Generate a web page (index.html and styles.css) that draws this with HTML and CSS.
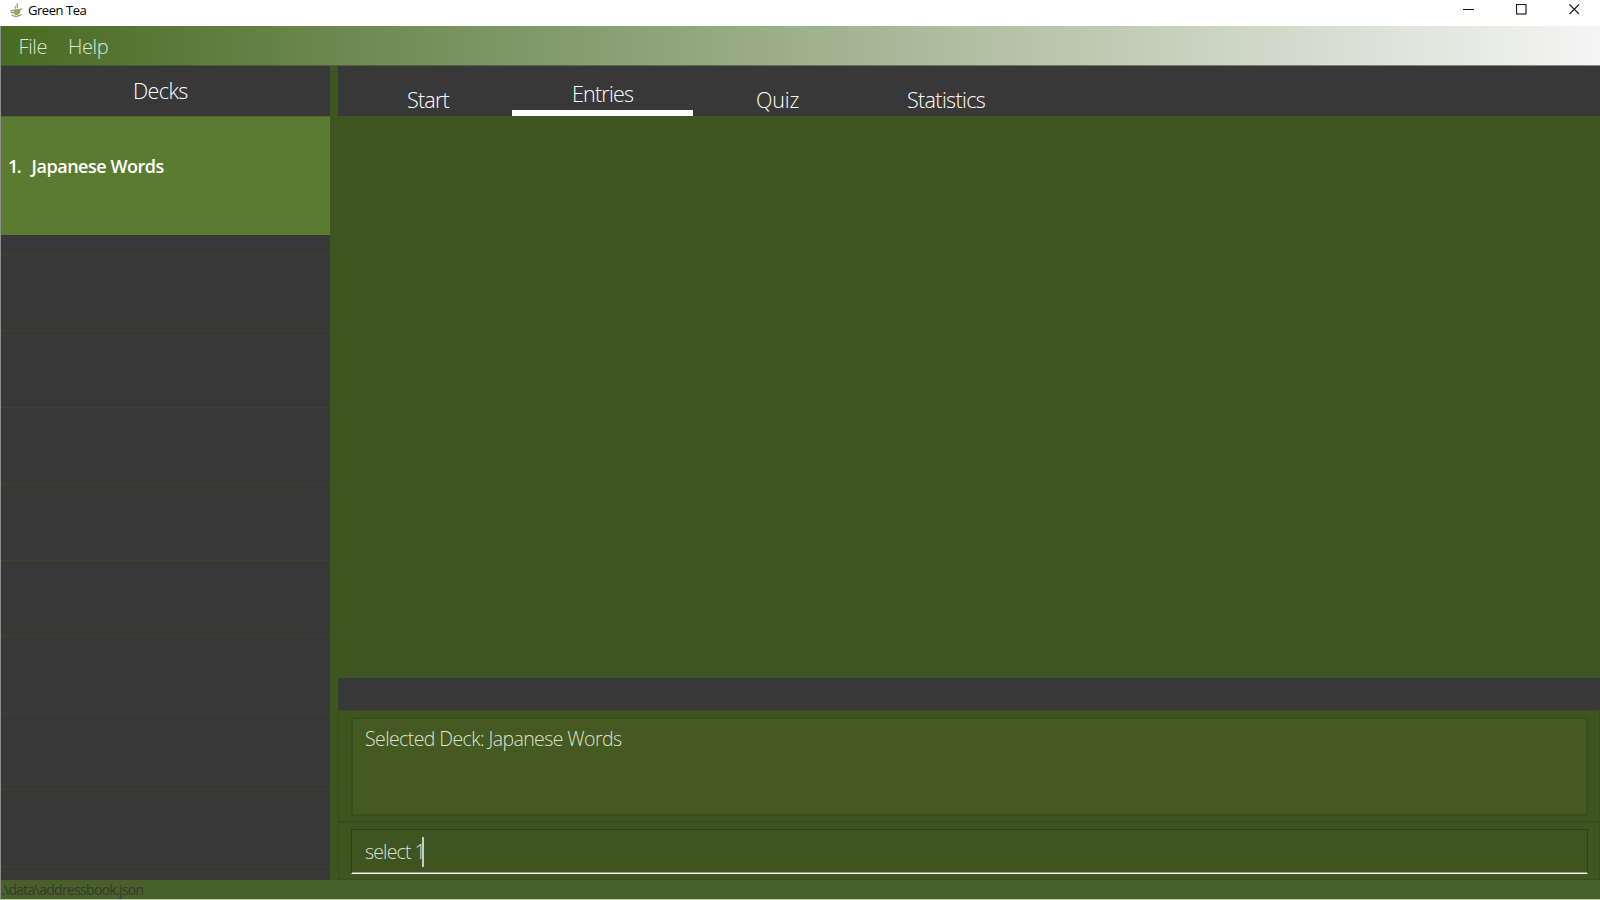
FILE: index.html
```html
<!DOCTYPE html>
<html lang="en">
<head>
<meta charset="utf-8">
<title>Green Tea</title>
<link rel="stylesheet" href="styles.css">
</head>
<body>
<div class="window">
  <header class="titlebar">
    <svg class="logo" width="13" height="15" viewBox="0 0 13 15">
      <path d="M7.600.4C6 2 8.600 2.600 7 4.800M5.600 3.200q-.8 1 .2 2.200" fill="none" stroke="#a3ad70" stroke-width="1.500"/>
      <path d="M3.400 6.400l7-.6c.4 2.800-.5 5.200-2.400 6.300H5.300C3.900 10.900 3.300 8.800 3.400 6.400z" fill="#94a954"/>
      <path d="M3.500 7.400C.2 6.600.2 9.800 4.200 10M10.400 6.400l2-.6" fill="none" stroke="#8a9b7c" stroke-width="1.200"/>
      <path d="M1.500 12q5 2.800 10-.4" fill="none" stroke="#7d9087" stroke-width="1.200"/>
    </svg>
    <span class="app-name">Green Tea</span>
    <div class="controls">
      <svg width="11" height="12" viewBox="0 0 11 12"><path d="M0 5.500h11" stroke="#111" fill="none"/></svg>
      <svg width="11" height="12" viewBox="0 0 11 12"><rect x=".5" y=".5" width="9.500" height="9.500" stroke="#222" stroke-width="1.200" fill="none"/></svg>
      <svg width="11" height="12" viewBox="0 0 11 12"><path d="M.5.500l9.500 9.500M10 .5l-9.500 9.500" stroke="#222" stroke-width="1.200" fill="none"/></svg>
    </div>
  </header>
  <nav class="menubar"><span class="menu-file">File</span><span class="menu-help">Help</span></nav>
  <div class="body">
    <aside class="sidebar">
      <div class="side-title"><span>Decks</span></div>
      <div class="deck"><span class="num">1.</span><span class="name">Japanese Words</span></div>
      <div class="empty-list">
        <div class="row first"></div>
        <div class="row"></div><div class="row tall"></div>
        <div class="row"></div><div class="row tall"></div>
        <div class="row"></div><div class="row tall"></div>
        <div class="row"></div><div class="row tall"></div>
      </div>
    </aside>
    <main class="main">
      <div class="tabs">
        <div class="tab t-start"><span>Start</span></div>
        <div class="tab t-entries active"><span>Entries</span></div>
        <div class="tab t-quiz"><span>Quiz</span></div>
        <div class="tab t-stats"><span>Statistics</span></div>
      </div>
      <div class="content"></div>
      <div class="band"></div>
      <section class="result-pane"><div class="result"><span>Selected Deck: Japanese Words</span></div></section>
      <section class="command-pane"><div class="command"><span>select 1</span><i class="caret"></i></div></section>
    </main>
  </div>
  <footer class="status"><span>.\data\addressbook.json</span></footer>
</div>
</body>
</html>
```
FILE: styles.css
```css
* { box-sizing: border-box; }
body { margin: 0; font-family: "Open Sans", "Noto Sans", sans-serif; font-weight: 300; overflow: hidden; }
span { display: inline-block; white-space: nowrap; }
.window { width: 1600px; height: 900px; display: flex; flex-direction: column; background: #3e5521; border-left: 1px solid #8d908c; }
.titlebar { height: 26px; margin-left: -1px; background: #fff; display: flex; align-items: flex-start; padding: 3px 20px 0 10px; flex: none; }
.app-name { margin: -1px 0 0 5px; font-size: 13px; line-height: 16px; font-weight: 400; letter-spacing: -.45px; color: #000; }
.controls { margin-left: auto; display: flex; gap: 42px; padding-top: 1px; }
.menubar { height: 40px; flex: none; display: flex; align-items: center; padding: 1px 0 0 17.500px; font-size: 20px; color: #dfe6d6; background: linear-gradient(90deg, #486b23, #f5f5f5); border-bottom: 1px solid rgba(60,70,50,.6); }
.menu-file { width: 49.500px; letter-spacing: -.4px; }
.menu-help { letter-spacing: -.4px; }
.body { height: 814px; flex: none; display: flex; }
.sidebar { width: 329px; flex: none; display: flex; flex-direction: column; background: #383838; }
.side-title { height: 50px; display: flex; padding-left: 132px; font-size: 21.500px; line-height: 50px; letter-spacing: -.6px; color: #fff; }
.deck { height: 119px; flex: none; background: #5a7b30; border-top: 1px solid #4d6a2b; display: flex; padding: 36.500px 0 0 7px; font-size: 18px; line-height: 25px; font-weight: 600; color: #fff; }
.num { width: 23.500px; letter-spacing: -1.500px; }
.name { letter-spacing: -.46px; }
.empty-list { flex: 1; min-height: 0; }
.row { height: 76px; border-bottom: 1px solid #3a432f; }
.row.tall { height: 77px; }
.row.first { height: 20px; }
.main { flex: 1; margin-left: 8px; display: flex; flex-direction: column; }
.tabs { height: 50px; flex: none; display: flex; background: #383838; font-size: 21.500px; line-height: 28px; color: #fff; }
.tab { display: flex; padding-top: 20px; flex: none; letter-spacing: -.65px; }
.t-start { width: 174px; padding-left: 69px; letter-spacing: -.8px; }
.t-entries { width: 181px; padding: 14px 0 0 60px; border-bottom: 6px solid #fff; letter-spacing: -.8px; }
.t-quiz { width: 214px; padding-left: 63px; letter-spacing: -.2px; }
.content { height: 562px; flex: none; }
.band { height: 32px; flex: none; background: #383838; }
.result-pane { height: 113px; flex: none; padding: 6px 11px 5px 12px; border: 1px solid #374d1c; border-bottom-width: 2px; }
.result { height: 99px; width: 1237px; border: 2px solid #384e1c; background: #455a21; padding: 6px 12px; font-size: 19.500px; line-height: 27px; letter-spacing: -.6px; color: #dde1d5; }
.command-pane { flex: 1; padding: 6px 11px 5px 12px; border: 1px solid #374d1c; border-top: 0; }
.command { height: 45px; width: 1237px; border: 1px solid #2e4216; border-bottom: 1px solid #fff; box-shadow: inset 0 -1px #8c9a79; display: flex; padding: 7px 13px; font-size: 19.500px; line-height: 30px; letter-spacing: -.85px; color: #dde1d5; }
.command span { width: 57px; }
.caret { width: 2px; height: 30px; background: #c8cfbd; }
.status { height: 20px; flex: none; background: #48602a; border-bottom: 1px solid #c6d0b7; font-size: 14px; line-height: 20px; font-weight: 400; letter-spacing: -.7px; color: #353a30; }
```
